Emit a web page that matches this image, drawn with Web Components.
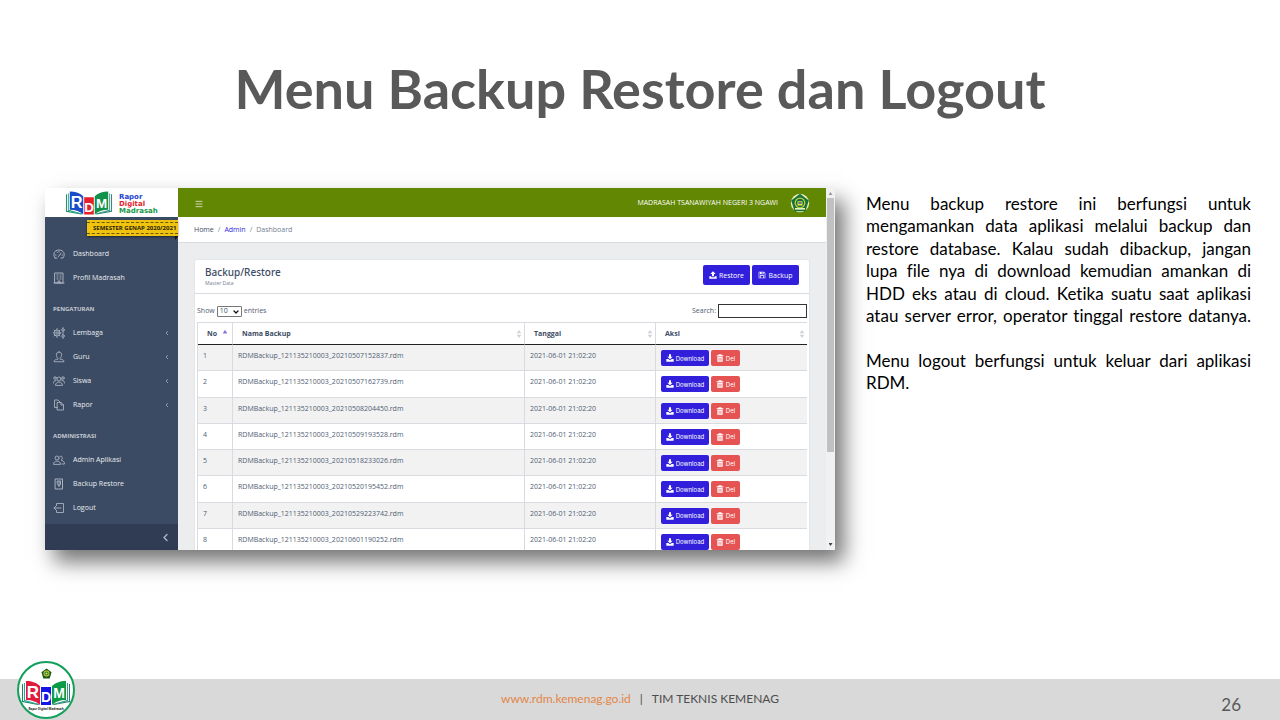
<!DOCTYPE html>
<html lang="id">
<head>
<meta charset="utf-8">
<title>Menu Backup Restore dan Logout</title>
<style>
html,body{margin:0;background:#fff}
body{font-family:Lato,"Open Sans",sans-serif;font-variant-ligatures:none}
.full{text-align-last:justify}
</style>
</head>
<body>
<slide-page>
  <span slot="heading">Menu Backup Restore dan Logout</span>
  <rdm-window slot="media"></rdm-window>
  <p slot="copy" class="full">Menu backup restore ini berfungsi untuk mengamankan data aplikasi melalui backup dan restore database. Kalau sudah dibackup, jangan lupa file nya di download kemudian amankan di HDD eks atau di cloud. Ketika suatu saat aplikasi atau server error, operator tinggal restore datanya.</p>
  <p slot="copy">Menu logout berfungsi untuk keluar dari aplikasi RDM.</p>
  <slide-footer slot="footer" page="26">TIM TEKNIS KEMENAG</slide-footer>
</slide-page>

<script>
const define = (name, html, setup) => {
  const t = document.createElement('template');
  t.innerHTML = '<style>*{box-sizing:border-box}</style>' + html;
  customElements.define(name, class extends HTMLElement {
    connectedCallback() {
      if (this.shadowRoot) return;
      this.attachShadow({mode: 'open'}).append(t.content.cloneNode(true));
      if (setup) setup(this.shadowRoot, this);
    }
  });
};

const stroke = (d, w = 1.5) => `<g fill="none" stroke="currentColor" stroke-width="${w}" stroke-linejoin="round" stroke-linecap="round">${d}</g>`;
const ICONS = {
  gauge: stroke('<path d="M4 20C-1 13 2 4 12 4s13 9 8 16h-4M4 20h4M11 17l5-7M5 14h1M8 8l1 1M12 7v1M18 14h1"/>', 2),
  building: stroke('<path d="M4 2h16v20H4zM8 6h2M14 6h2M8 10h2M14 10h2M8 14h2M14 14h2M10 22v-4h4v4M2 22h20"/>', 2),
  gears: stroke('<circle cx="8" cy="12" r="2.500"/><circle cx="8" cy="12" r="6"/><path d="M8 3v3M8 18v3M0 12h2M14 12h2M2 6l2 2M12 16l2 2M14 6l-2 2M4 16l-2 2"/><circle cx="20" cy="6" r="2.500"/><circle cx="20" cy="18" r="2.500"/><path d="M20 1v2M20 9v2M20 13v2M20 21v2"/>', 1.8),
  user: stroke('<path d="M12 2c4 0 6 3 5 7c0 3-2 5-3 5.500v2c4 0 8 1 8 5H2c0-4 4-5 8-5v-2C9 14 7 12 7 9c-1-4 1-7 5-7z"/>', 1.8),
  people: stroke('<circle cx="12" cy="8" r="4"/><path d="M5 20c0-8 14-8 14 0z"/><circle cx="4" cy="6" r="2.500"/><circle cx="20" cy="6" r="2.500"/><path d="M1 16c0-3 1-5 5-5M23 16c0-3-1-5-5-5"/>', 1.8),
  duo: stroke('<circle cx="8" cy="8" r="4"/><path d="M1 20c0-8 14-8 14 0z"/><path d="M14 4.500c4-2 7 4 3 7M17 13c4 0 6 3 6 7h-5"/>', 1.8),
  copy: stroke('<path d="M9 7h7l5 5v10H9zM16 7v5h5M9 17H3V2h7l5 5"/>', 1.8),
  backup: stroke('<path d="M5 2h14v20H5zM9 6h6v6l-3 5-3-5zM12 7v7"/>', 2),
  logout: stroke('<path d="M7 7V3h14v18H7v-4M16 12H2M6 8l-4 4 4 4"/>', 1.8),
  left: stroke('<path d="M15 5l-7 7 7 7"/>', 3),
  leftbold: stroke('<path d="M16 4l-8 8 8 8"/>', 4),
  down: stroke('<path d="M4 8l8 8 8-8"/>', 5),
  menu: stroke('<path d="M3 4h18M3 12h18M3 20h18"/>', 2),
  download: '<path fill="currentColor" d="M9 1h6v7h5l-8 8-8-8h5zM1 15h6l5 4 5-4h6v8H1z"/>',
  upload: '<path fill="currentColor" d="M9 16h6V9h5l-8-8-8 8h5zM1 16h6v3h10v-3h6v7H1z"/>',
  save: '<path fill="currentColor" fill-rule="evenodd" d="M2 2h16l4 4v16H2zM4 4v16h2v-7h12v7h2V7l-3-3v6H6V4zM11 4v4h3V4zM8 15v5h8v-5z"/>',
  trash: '<path fill="currentColor" fill-rule="evenodd" d="M8 1h8l1 3h5v3H2V4h5zM4 8h16v15H4zM8 11v9h1.500v-9zM11.300 11v9h1.500v-9zM14.500 11v9h1.500v-9z"/>',
  sort: '<path fill="currentColor" d="M12 0l7 10H5zM12 24l7-10H5z"/>',
  asc: '<path fill="currentColor" d="M12 3l9 15H3z"/>',
  seal: '<circle cx="12" cy="12" r="11" fill="#e9f0b8"/><path fill="#16723b" d="M12 1l10.500 8-4 13h-13L1.500 9z"/><circle cx="12" cy="12" r="6.500" fill="#c9cf3c"/><circle cx="12" cy="12" r="5" fill="#16723b"/><path fill="#f3e44b" d="M9 10h6v5H9z"/><path fill="#3f6c8a" d="M10 11h4v2h-4z"/><path fill="#e9f0b8" d="M6 18h12v2H6z"/>',
  crest: '<path fill="#16581f" d="M12 1l11 8-4 14H5L1 9z"/><circle cx="12" cy="12" r="6.500" fill="#d9cf2b"/><circle cx="12" cy="12" r="4.500" fill="#16723b"/><path fill="#f3e44b" d="M10 10h4v4h-4z"/>'
};
define('ui-icon', `<style>:host{display:inline-flex;flex:none;width:var(--size,8px);height:var(--size,8px)}svg{width:100%;height:100%;display:block}</style><svg viewBox="0 0 24 24" aria-hidden="true"></svg>`,
  (root, el) => root.querySelector('svg').innerHTML = ICONS[el.getAttribute('name')]);

/* Open book with one coloured page per letter; attributes choose the page colours. */
define('book-logo', `<style>:host{display:block}svg{display:block;width:100%;height:100%}text{font:bold 17px "Liberation Sans",sans-serif;fill:#fff;text-anchor:middle}.s{font-size:14px}</style>
<svg viewBox="0 0 50 26" role="img" aria-label="RDM">
<path d="M1 4h1v17l15 3v1L1 22z" fill="#128a63"/><path d="M3 3h1v17l14 4v1L3 21z" fill="#2fa58f"/>
<path d="M49 4h-1v17l-15 3v1l16-3z" fill="#2b7f73"/><path d="M47 3h-1v17l-14 4v1l15-4z" fill="#3b9a8c"/>
<path class="a" d="M5 1c6 0 11 2 14 5v19c-3-3-8-5-14-5z"/><path class="c" d="M45 1c-6 0-11 2-14 5v19c3-3 8-5 14-5z"/><path class="b" d="M20 7h10v18h-10z"/>
<text x="12" y="18">R</text><text class="s" x="25" y="22">D</text><text class="s" x="38" y="18">M</text></svg>`,
  (root, el) => {
    const colors = (el.getAttribute('colors') || '').split(' ');
    ['a', 'b', 'c'].forEach((k, i) => root.querySelector('.' + k).setAttribute('fill', colors[i]));
  });

define('slide-page', `<style>
:host{display:flex;flex-direction:column;min-height:100vh;color:#000}
h1{margin:0;padding:57px 24px 0;font-size:54px;line-height:64px;font-weight:700;color:#595959;text-align:center}
main{flex:1;display:grid;grid-template-columns:minmax(0,790fr) minmax(0,385fr);gap:31px;align-items:start;padding:67px 29px 40px 45px}
.copy{display:flex;flex-direction:column;gap:22px;padding-top:5px;font-size:17px;line-height:1.32;text-align:justify}
::slotted(p){margin:0}
</style><h1><slot name="heading"></slot></h1><main><slot name="media"></slot><div class="copy"><slot name="copy"></slot></div></main><slot name="footer"></slot>`);

define('slide-footer', `<style>
:host{display:grid;grid-template-columns:1fr auto 1fr;align-items:center;position:relative;height:41px;background:#d9d9d9;color:#4d4d4d;font-size:12px;padding:0 39px}
a{color:#e48648;text-decoration:none}.mid{grid-column:2;display:flex;gap:9px;padding-bottom:2px}
.num{justify-self:end;font-size:17px;color:#595959;padding-top:10px}
.seal{position:absolute;left:17px;bottom:1px;width:58px;height:58px;border:2px solid #12a05c;border-radius:50%;background:#fff;display:flex;flex-direction:column;align-items:center;padding-top:5px}
.seal ui-icon{--size:11px}.seal book-logo{width:50px;height:28px}.seal small{font:bold 3px "Open Sans",sans-serif;color:#222;line-height:4px}
</style><div class="seal"><ui-icon name="crest"></ui-icon><book-logo colors="#e31b3c #1414e6 #0d9a49"></book-logo><small>Rapor Digital Madrasah</small></div>
<div class="mid"><a href="#">www.rdm.kemenag.go.id</a><span>|</span><slot></slot></div><span class="num"></span>`,
  (root, el) => root.querySelector('.num').textContent = el.getAttribute('page'));

define('nav-item', `<style>
:host{display:block}
a{display:flex;align-items:center;height:24px;padding:0 8px;color:#e8ebf0;text-decoration:none}
.i{display:flex;width:20px;--size:12px;color:#a9b1bf}
.t{flex:1}.c{--size:6px;color:#a9b1bf}
</style><a href="#"><span class="i"></span><span class="t"><slot></slot></span></a>`,
  (root, el) => {
    root.querySelector('.i').innerHTML = `<ui-icon name="${el.getAttribute('icon')}"></ui-icon>`;
    if (el.hasAttribute('more')) root.querySelector('a').insertAdjacentHTML('beforeend', '<ui-icon class="c" name="left"></ui-icon>');
  });

define('side-bar', `<style>
:host{display:flex;flex-direction:column;width:133px;flex:none;background:#3c4b64;color:#fff}
.brand{display:flex;align-items:center;gap:6px;height:29px;background:#fff;padding:0 20px;font:bold 7px/7px "DejaVu Sans",sans-serif}
.brand>div{padding-top:3px}
.brand book-logo{width:48px;height:26px}
.brand b{display:block}.r{color:#1c3fd2}.d{color:#e5232e}.m{color:#179a4a}
.ribbon{align-self:flex-end;position:relative;margin-top:3px;height:16px;width:91px;padding:2px 0;background:#f0c30f;color:#2b2407;font:bold 6px/10px "Open Sans",sans-serif;box-shadow:0 1px 2px rgba(0,0,0,.5)}
.ribbon span{display:block;border:dashed #6b5708;border-width:1px 0;padding-left:6px;white-space:nowrap}
.ribbon::after{content:"";position:absolute;right:0;top:16px;width:3px;height:4px;background:#111;clip-path:polygon(0 0,100% 0,0 100%)}
nav{flex:1;padding-top:6px}
h2{margin:0;height:31px;padding:14px 8px 0;font-size:6px;line-height:10px;color:#c4c9d1}
button{height:26px;border:0;background:#303c54;color:#a9b1bf;padding:0 8px;display:flex;justify-content:flex-end;align-items:center}
button ui-icon{--size:9px}
</style>
<div class="brand"><book-logo colors="#174bc9 #e3202c #12914b"></book-logo><div><b class="r">Rapor</b><b class="d">Digital</b><b class="m">Madrasah</b></div></div>
<div class="ribbon"><span>SEMESTER GENAP 2020/2021</span></div>
<nav>
<nav-item icon="gauge">Dashboard</nav-item><nav-item icon="building">Profil Madrasah</nav-item>
<h2>PENGATURAN</h2>
<nav-item icon="gears" more>Lembaga</nav-item><nav-item icon="user" more>Guru</nav-item><nav-item icon="people" more>Siswa</nav-item><nav-item icon="copy" more>Rapor</nav-item>
<h2>ADMINISTRASI</h2>
<nav-item icon="duo">Admin Aplikasi</nav-item><nav-item icon="backup">Backup Restore</nav-item><nav-item icon="logout">Logout</nav-item>
</nav><button aria-label="Ciutkan menu"><ui-icon name="leftbold"></ui-icon></button>`);

define('action-button', `<style>
:host{display:inline-flex}
button{display:flex;align-items:center;justify-content:center;gap:2px;width:100%;height:20px;border:0;border-radius:2px;padding:0;background:#321fdb;color:#fff;font:7px "Open Sans",sans-serif}
:host([small]) button{height:16px;font:6px Inter,"Open Sans",sans-serif}
:host([danger]) button{background:#e55353}
</style><button><ui-icon></ui-icon><slot></slot></button>`,
  (root, el) => root.querySelector('button').firstElementChild.outerHTML = `<ui-icon name="${el.getAttribute('icon')}"></ui-icon>`);

define('backup-table', `<style>
:host{display:block}
table{width:100%;height:233px;table-layout:fixed;border-collapse:separate;border-spacing:0;border-top:1px solid #d8dbe0;border-left:1px solid #d8dbe0;border-bottom:1px solid #d8dbe0}
.no{width:34px}.date{width:131px}.act{width:152px}
th{height:22px;padding:0 9px;text-align:left;font-weight:700;color:#3c4b64;border-bottom:1px solid #222}
th:first-child{padding-right:4px}
th div{display:flex;justify-content:space-between;align-items:center}
th ui-icon{--size:8px;color:#cfd2d8;margin-right:-8px}
th:first-child ui-icon{--size:6px;color:#7d79d8;margin:0 0 4px}
td{padding:6px 5px 3px;line-height:10px;vertical-align:top;border-bottom:1px solid #d8dbe0}
td:last-child{padding:5px 5px 4px}
th+th,td+td{border-left:1px solid #d8dbe0}
tr:last-child td{border-bottom:0}
tbody tr:nth-child(odd){background:#f2f2f2}
.b{display:flex;gap:2px}.dl{width:48px}.del{width:29px}
</style><table><colgroup><col class="no"><col><col class="date"><col class="act"></colgroup>
<thead><tr><th><div>No<ui-icon name="asc"></ui-icon></div></th><th><div>Nama Backup<ui-icon name="sort"></ui-icon></div></th><th><div>Tanggal<ui-icon name="sort"></ui-icon></div></th><th><div>Aksi<ui-icon name="sort"></ui-icon></div></th></tr></thead><tbody></tbody></table>`,
  root => {
    root.querySelector('tbody').innerHTML = ['20210507152837', '20210507162739', '20210508204450', '20210509193528', '20210518233026', '20210520195452', '20210529223742', '20210601190252']
      .map((id, i) => `<tr><td>${i + 1}</td><td>RDMBackup_121135210003_${id}.rdm</td><td>2021-06-01 21:02:20</td><td><div class="b"><action-button class="dl" small icon="download">Download</action-button><action-button class="del" small danger icon="trash">Del</action-button></div></td></tr>`).join('');
  });

define('backup-card', `<style>
:host{display:block;background:#fff;border:1px solid #e3e5e9;border-radius:2px}
header{display:flex;justify-content:space-between;align-items:center;height:34px;padding:0 10px;border-bottom:1px solid #d8dbe0;color:#3c4b64}
h3{margin:0;font-family:"Noto Sans","Open Sans",sans-serif;font-size:10px;line-height:13px;font-weight:500}
small{display:block;font-size:5px;line-height:8px;color:#768192}
.btns{display:flex;gap:2px;padding-bottom:3px}.btns action-button{width:47px}
.tools{display:flex;justify-content:space-between;align-items:center;padding:10px 2px 4px;height:28px}
label{display:flex;align-items:center;gap:2px}
.sel{position:relative;display:flex}
select{appearance:none;width:25px;height:11px;border:1px solid #777;border-radius:1px;background:#fff;font:7px/8px "Open Sans",sans-serif;color:#3c4b64;padding:0 2px}
.sel ui-icon{--size:6px;position:absolute;right:3px;top:3px;color:#111;pointer-events:none}
input{width:89px;height:14px;border:1px solid #333;border-radius:0;background:#fff;font:7px "Open Sans",sans-serif;padding:1px 3px}
.wrap{padding:0 2px}
</style><header><div><h3>Backup/Restore</h3><small>Master Data</small></div><div class="btns"><action-button icon="upload">Restore</action-button><action-button icon="save">Backup</action-button></div></header>
<div class="tools"><label>Show <span class="sel"><select aria-label="Show entries"><option>10</option><option>25</option></select><ui-icon name="down"></ui-icon></span> entries</label><label>Search: <input type="search"></label></div>
<div class="wrap"><backup-table></backup-table></div>`);

define('rdm-window', `<style>
:host{display:flex;aspect-ratio:790/362;min-height:0;overflow:hidden;background:#ebedef;font-family:"Open Sans","Noto Sans",sans-serif;font-size:7px;line-height:10px;color:#4f5d73;box-shadow:9px 12px 20px rgba(0,0,0,.55)}
.main{flex:1;min-width:0;display:flex;flex-direction:column}
.top{flex:none;display:flex;align-items:center;height:29px;background:#628703;color:#fff;padding:0 16px}
.top ui-icon:first-child{--size:10px;margin-right:auto;padding-top:2px}.top ui-icon:last-child{--size:20px;margin-left:12px}
.crumb{flex:none;display:flex;align-items:center;gap:4px;height:26px;padding:0 16px;background:#fff;border-bottom:1px solid #d8dbe0;color:#768192}
.crumb a{color:#3c4b64;text-decoration:none}.crumb a+span+a{color:#321fdb}
backup-card{margin:16px 16px 0}
.bar{flex:none;width:9px;background:#f1f1f1;display:flex;flex-direction:column;align-items:center}
.bar i{width:4px;height:3px;flex:none}
.up{margin:4px 0 3px;background:#999;clip-path:polygon(50% 0,100% 100%,0 100%)}
.dn{margin:auto 0 4px;background:#444;clip-path:polygon(0 0,100% 0,50% 100%)}
.thumb{flex:none;width:7px;height:254px;background:#c1c1c1}
</style><side-bar></side-bar><div class="main"><div class="top"><ui-icon name="menu"></ui-icon><span>MADRASAH TSANAWIYAH NEGERI 3 NGAWI</span><ui-icon name="seal"></ui-icon></div>
<div class="crumb"><a href="#">Home</a><span>/</span><a href="#">Admin</a><span>/</span><span>Dashboard</span></div>
<backup-card></backup-card></div><div class="bar"><i class="up"></i><div class="thumb"></div><i class="dn"></i></div>`);
</script>
</body>
</html>
